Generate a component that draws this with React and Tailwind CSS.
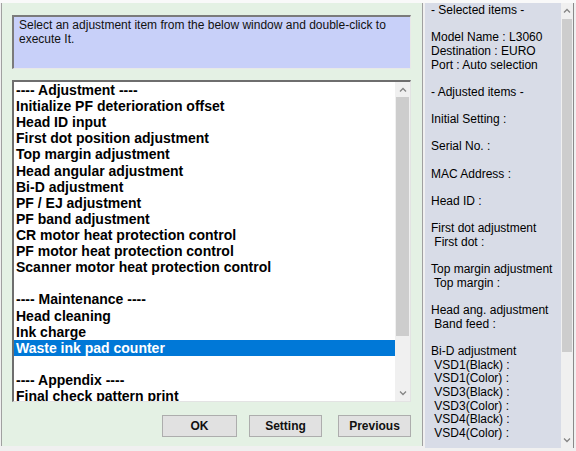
import React from 'react'

const listItems = [
    '---- Adjustment ----',
    'Initialize PF deterioration offset',
    'Head ID input',
    'First dot position adjustment',
    'Top margin adjustment',
    'Head angular adjustment',
    'Bi-D adjustment',
    'PF / EJ adjustment',
    'PF band adjustment',
    'CR motor heat protection control',
    'PF motor heat protection control',
    'Scanner motor heat protection control',
    '',
    '---- Maintenance ----',
    'Head cleaning',
    'Ink charge',
    'Waste ink pad counter',
    '',
    '---- Appendix ----',
    'Final check pattern print',
]

const infoLines = [
    '- Selected items -',
    '',
    'Model Name : L3060',
    'Destination : EURO',
    'Port : Auto selection',
    '',
    '- Adjusted items -',
    '',
    'Initial Setting :',
    '',
    'Serial No. :',
    '',
    'MAC Address :',
    '',
    'Head ID :',
    '',
    'First dot adjustment',
    ' First dot :',
    '',
    'Top margin adjustment',
    ' Top margin :',
    '',
    'Head ang. adjustment',
    ' Band feed :',
    '',
    'Bi-D adjustment',
    ' VSD1(Black) :',
    ' VSD1(Color) :',
    ' VSD3(Black) :',
    ' VSD3(Color) :',
    ' VSD4(Black) :',
    ' VSD4(Color) :',
]

function Arrow({ up }) {
    return (
        <svg width="8" height="5" viewBox="0 0 8 5" className="block">
            <path d={up ? 'M1 4.5 L4 1.5 L7 4.5' : 'M1 0.5 L4 3.5 L7 0.5'} fill="none" stroke="#858585" strokeWidth="1.3" />
        </svg>
    )
}

function Scrollbar({ thumbTop, thumbHeight, width }) {
    return (
        <div className={`flex flex-col bg-[#f0f0f0] shrink-0 ${width}`}>
            <div className="h-[15px] flex items-center justify-center shrink-0"><Arrow up /></div>
            <div className="flex-1 relative">
                <div className="absolute left-[1px] right-[1px] bg-[#cdcdcd]" style={{ top: thumbTop, height: thumbHeight }} />
            </div>
            <div className="h-[15px] flex items-center justify-center shrink-0"><Arrow /></div>
        </div>
    )
}

function Btn({ label, className }) {
    return (
        <button className={`h-[22px] bg-[#e1e1e1] border border-[#adadad] text-[12px] font-bold text-[#111] leading-none ${className}`}>
            {label}
        </button>
    )
}

export default function App() {
    return (
        <div className="w-[576px] h-[451px] bg-[#f0f0f0] flex flex-col overflow-hidden" style={{ fontFamily: '"Liberation Sans", Arial, sans-serif' }}>
            <div className="h-[3px] bg-[#f9f9f9] shrink-0" />
            <div className="flex">
                {/* 左侧操作面板 */}
                <div className="ml-[1px] w-[422px] h-[443px] bg-[#e4f1e4] border-l border-r border-[#a0a0a0] pl-[10px] pt-[12px] flex flex-col">
                    <div className="w-[399px] h-[54px] bg-[#c8d0f9] border-t-2 border-l-2 border-[#7b7b7b] border-b border-r border-b-[#e8e8e8] border-r-[#e8e8e8] pl-[5px] pt-[1px] text-[12px] leading-[14px] text-[#111]">
                        Select an adjustment item from the below window and double-click to execute It.
                    </div>

                    <div className="mt-[11px] w-[399px] h-[322px] bg-white border-t-2 border-l-2 border-[#6e6e6e] border-b border-r border-b-[#e3e3e3] border-r-[#e3e3e3] flex">
                        <div className="flex-1 overflow-hidden">
                            {listItems.map((item, i) => (
                                <div
                                    key={i}
                                    className={`h-[16.12px] leading-[16px] text-[14px] font-bold pl-[2px] whitespace-nowrap ${item === 'Waste ink pad counter' ? 'bg-[#0078d7] text-white' : 'text-black'}`}
                                >
                                    {item}
                                </div>
                            ))}
                        </div>
                        <Scrollbar width="w-[15px]" thumbTop={0} thumbHeight={239} />
                    </div>

                    <div className="mt-[13px] flex">
                        <Btn label="OK" className="ml-[150px] w-[75px]" />
                        <Btn label="Setting" className="ml-[12px] w-[73px]" />
                        <Btn label="Previous" className="ml-[16px] w-[73px]" />
                    </div>
                </div>

                {/* 右侧信息面板 */}
                <div className="ml-[2px] w-[149px] h-[445px] bg-[#d8dce7] flex border-r border-[#8a8a8a]">
                    <div className="flex-1 pl-[6px] pt-[1px] overflow-hidden">
                        {infoLines.map((line, i) => (
                            <div key={i} className="h-[13.65px] leading-[13.65px] text-[12px] text-black whitespace-pre">
                                {line}
                            </div>
                        ))}
                    </div>
                    <Scrollbar width="w-[12px]" thumbTop={1} thumbHeight={333} />
                </div>
            </div>
        </div>
    )
}
